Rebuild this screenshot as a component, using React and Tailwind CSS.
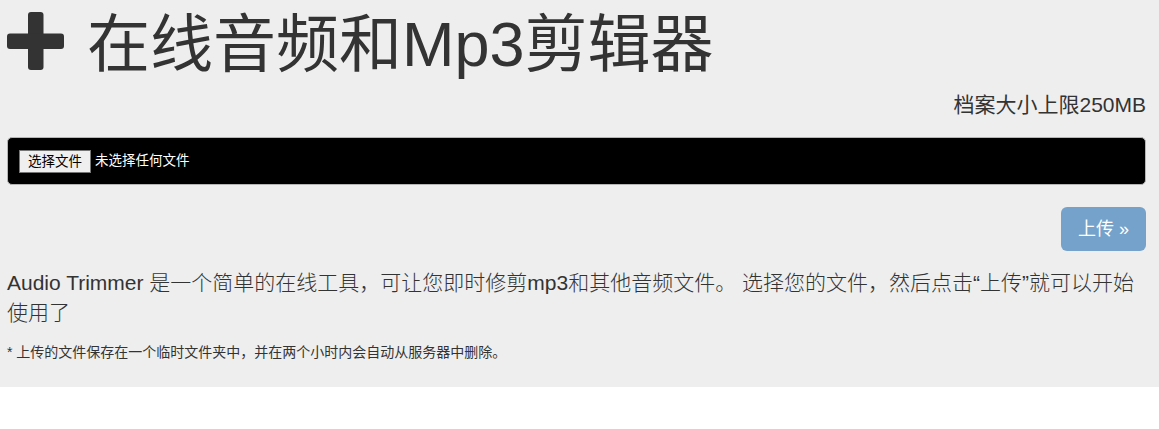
export default function App() {
  const font = { fontFamily: '"Liberation Sans", "Noto Sans CJK SC", sans-serif' };
  return (
    <div style={font} className="w-full bg-white text-[#333]">
      <div className="bg-[#eeeeee] pl-[7px] pr-[13px] pt-[10px] pb-[25px]">
        <h1 className="flex items-start text-[63px] leading-[69px] font-normal">
          <svg width="57" height="58" viewBox="0 0 57 58" className="mt-[2px] mr-[23px] shrink-0">
            <rect x="21" y="0" width="15.5" height="58" rx="3" fill="#333" />
            <rect x="0" y="21.5" width="57" height="15.5" rx="3" fill="#333" />
          </svg>
          <span>在线音频和Mp3剪辑器</span>
        </h1>
        <p className="mt-[11px] text-right text-[21px] leading-[30px]">档案大小上限250MB</p>
        <div className="mt-[17px] flex h-[48px] items-center rounded-[5px] border border-[#b5b5b5] bg-black pl-[11px]">
          <button className="h-[23px] border border-[#767676] bg-[#efefef] px-[8px] text-[13.5px] leading-[21px] text-black">
            选择文件
          </button>
          <span className="ml-[4px] text-[13.5px] text-white">未选择任何文件</span>
        </div>
        <div className="mt-[22px] flex justify-end">
          <button className="h-[44px] w-[85px] rounded-[6px] bg-[#74a2ca] text-[18px] text-white">
            上传 »
          </button>
        </div>
        <p className="mt-[17px] text-[21px] leading-[30px] font-light">
          Audio Trimmer 是一个简单的在线工具，可让您即时修剪mp3和其他音频文件。 选择您的文件，然后点击“上传”就可以开始使用了
        </p>
        <p className="mt-[14px] text-[14px] leading-[20px]">
          * 上传的文件保存在一个临时文件夹中，并在两个小时内会自动从服务器中删除。
        </p>
      </div>
    </div>
  );
}
